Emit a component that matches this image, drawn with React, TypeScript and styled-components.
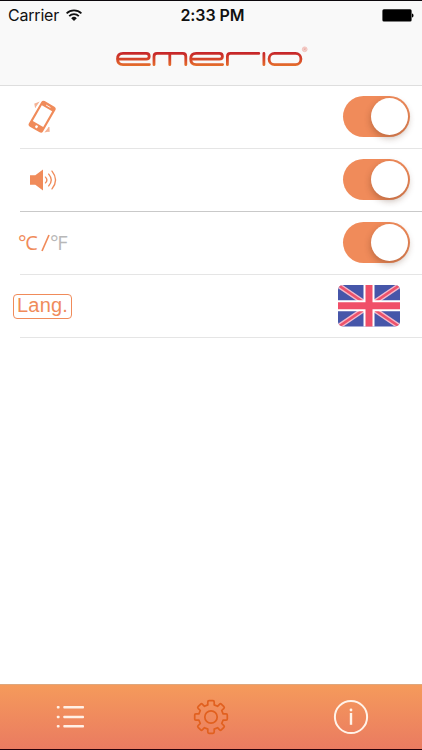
import React from "react";
import styled, { createGlobalStyle } from "styled-components";

const ORANGE = "#f08b5a";

const GlobalStyle = createGlobalStyle`
  * { box-sizing: border-box; }
  body { margin: 0; background: #fff; }
  svg { display: block; }
`;

const Screen = styled.div`
  width: 422px;
  height: 750px;
  display: flex;
  flex-direction: column;
  overflow: hidden;
  background: #fff;
  border-top: 1px solid #0c080c;
  border-bottom: 1px solid #25000a;
  font-family: Inter, "Liberation Sans", sans-serif;
`;

const Header = styled.header`
  height: 85px;
  flex: none;
  background: #f9f9f9;
  border-bottom: 1px solid #dedede;
`;

const StatusBar = styled.div`
  height: 28px;
  display: grid;
  grid-template-columns: 1fr auto 1fr;
  align-items: center;
  padding: 0 7px 0 8px;
  color: #111;
  font-size: 16px;
  line-height: 28px;
`;

const Network = styled.div`
  display: flex;
  align-items: center;
  gap: 7px;
`;

const Carrier = styled.span`
  width: 51px;
  letter-spacing: -0.2px;
  white-space: nowrap;
`;

const Clock = styled.span`
  padding-left: 2px;
  font-weight: 600;
  font-size: 16px;
  letter-spacing: -0.05px;
`;

const Power = styled.div`
  display: flex;
  justify-content: flex-end;
`;

const Brand = styled.div`
  display: flex;
  padding: 16px 0 0 115px;
`;

const Settings = styled.main`
  flex: 1;
`;

const Row = styled.div<{ $line?: string }>`
  height: 63px;
  margin-left: 20px;
  display: flex;
  align-items: center;
  justify-content: space-between;
  border-bottom: 1px solid ${(p) => p.$line ?? "#e5e5e5"};
`;

const RowIcon = styled.div<{ $shift: number }>`
  display: flex;
  margin-left: ${(p) => p.$shift}px;
`;

const Switch = styled.button<{ $on: boolean }>`
  width: 67px;
  height: 41px;
  margin: 0 12px 1px 0;
  padding: 2px;
  display: flex;
  justify-content: ${(p) => (p.$on ? "flex-end" : "flex-start")};
  border: 0;
  border-radius: 21px;
  background: ${ORANGE};
`;

const Knob = styled.span`
  width: 37px;
  height: 37px;
  border-radius: 50%;
  background: #fff;
  box-shadow: 0 3px 7px rgba(70, 30, 10, 0.32);
`;

const Units = styled.div`
  display: flex;
  align-items: center;
  margin-left: -2px;
  font-family: "Open Sans", "Noto Sans", sans-serif;
  font-weight: 400;
  font-size: 20px;
  line-height: 24px;
  letter-spacing: -1.4px;
  color: ${ORANGE};
`;

const Celsius = styled.span`
  width: 23px;
`;

const Slash = styled.span`
  width: 9px;
  display: flex;
`;

const Fahrenheit = styled.span`
  color: #b8b8b8;
`;

const LangBadge = styled.div`
  width: 59px;
  height: 25px;
  margin: 0 0 0 -7px;
  border: 1.5px solid ${ORANGE};
  border-radius: 4px;
  color: ${ORANGE};
  font-family: "Liberation Sans", Arial, sans-serif;
  font-size: 20px;
  line-height: 20px;
  letter-spacing: 0.15px;
  text-align: center;
`;

const FlagButton = styled.button`
  display: flex;
  margin: 0 22.5px 0 0;
  padding: 0;
  border: 0;
  background: none;
`;

const TabBar = styled.nav`
  height: 65px;
  flex: none;
  display: grid;
  grid-template-columns: repeat(3, 140.6px);
  justify-items: center;
  align-items: center;
  border-top: 1px solid #dea77d;
  background: linear-gradient(#f59a5b, #ea7b61);
`;

const Tab = styled.button`
  padding: 0;
  border: 0;
  background: none;
`;

const WifiIcon = () => (
  <svg width="16" height="13" viewBox="0 0 16 13" fill="none" stroke="#111" strokeWidth="1.8">
    <path d="M.6 4.4a10.4 10.4 0 0 1 14.8 0M3.2 7.2a6.7 6.7 0 0 1 9.6 0" />
    <path d="M5.2 9.2a4 4 0 0 1 5.6 0L8 12Z" fill="#111" stroke="none" />
  </svg>
);

const BatteryIcon = () => (
  <svg width="33" height="13" viewBox="0 0 33 13">
    <rect x=".4" y=".2" width="29.2" height="12.4" rx="1.5" />
    <path d="M30 4.5c2 .3 2 3.7 0 4Z" />
  </svg>
);

const EmerioLogo = () => (
  <svg width="194" height="24" viewBox="115 45 194 24" fill="none" role="img" aria-label="emerio">
    <defs>
      <linearGradient id="brand" gradientUnits="userSpaceOnUse" x1="0" y1="52" x2="0" y2="66">
        <stop offset="0" stopColor="#c4232a" />
        <stop offset=".5" stopColor="#d5442a" />
        <stop offset="1" stopColor="#e5702c" />
      </linearGradient>
    </defs>
    <g stroke="url(#brand)" strokeWidth="2.8" strokeLinecap="round" strokeLinejoin="round">
      <path d="M149.4 64.6H123q-5.5 0-5.5-5.6t5.5-5.6h23.2q3 0 3 2.9t-3 2.9H118" />
      <path d="M154 64.7V56.4q0-3 3-3h25.8q3 0 3 3v8.3M169.8 54v10.7" />
      <path d="M222.6 64.6h-26.4q-5.5 0-5.5-5.6t5.5-5.6h23.2q3 0 3 2.9t-3 2.9h-28" />
      <path d="M227.4 64.7V56.4q0-3 3-3h28.4M263.9 53.4v11.3" />
      <rect x="269.1" y="53.4" width="31.8" height="11.2" rx="5.4" />
    </g>
    <circle cx="304.7" cy="49.3" r="2.4" fill="#f7dcd8" stroke="#efb5ae" strokeWidth=".7" />
    <path d="M304 50.6v-2.5h.9q.8 0 .8.7t-.8.7H304m1 0 .7 1.1" stroke="#e4938a" strokeWidth=".45" />
  </svg>
);

const VibrateIcon = () => (
  <svg width="28" height="34" viewBox="0 0 28 34">
    <g transform="rotate(30 14 17)">
      <rect x="5.9" y="1.9" width="16.2" height="29.6" rx="2.5" fill={ORANGE} />
      <rect x="8" y="7" width="12" height="18" fill="#fff" />
      <path d="M12 4.6h4.2" stroke="#fff" strokeWidth=".8" strokeLinecap="round" />
      <circle cx="14.1" cy="28.1" r="1.4" fill="#fff" />
    </g>
    <path d="m6.8 3.4 4.9-1.8-4.2 6Z M20.9 26.8l-4.5 5.8 4.9-1Z" fill="#f4b193" />
    <path d="m6.8 3.6.7 4M21 27v5" stroke="#f4b193" strokeWidth="1" />
  </svg>
);

const SoundIcon = () => (
  <svg width="28" height="22" viewBox="0 0 28 22" fill="none">
    <path d="M1 6.3h5.3L14 .6v20.8l-7.7-5.7H1Z" fill={ORANGE} />
    <g stroke={ORANGE} strokeWidth="1.35" strokeLinecap="round">
      <path d="M16.5 8.1q2.8 2.9 0 5.8M19.7 5.1q5.1 5.9 0 11.8M23 2.1q7.1 8.9 0 17.8" />
    </g>
  </svg>
);

const SlashIcon = () => (
  <svg width="9" height="18" viewBox="0 0 9 18">
    <path d="m1 17 7-16" stroke={ORANGE} strokeWidth="1.7" />
  </svg>
);

const BritishFlag = () => (
  <svg width="62" height="42" viewBox="0 0 62 42">
    <clipPath id="flag"><rect width="62" height="41.4" rx="5" /></clipPath>
    <g clipPath="url(#flag)">
      <path d="M0 0h62v42H0Z" fill="#4656a9" />
      <path d="m0 0 62 42M0 42 62 0" stroke="#f4b8ca" strokeWidth="5.2" />
      <path d="m0 0 62 42M0 42 62 0" stroke="#ed526b" strokeWidth="2.6" />
      <path d="M31 0v42M0 20.8h62" stroke="#fff" strokeWidth="11" />
      <path d="M31 0v42M0 20.8h62" stroke="#f04f68" strokeWidth="7" />
    </g>
  </svg>
);

const ListIcon = () => (
  <svg width="28" height="24" viewBox="0 0 28 24" fill="#fff0e6">
    {[1, 10.8, 20].map((y) => (
      <g key={y}>
        <rect x="0.8" y={y} width="2.8" height="2.5" rx=".8" />
        <rect x="7.3" y={y} width="20.7" height="2.5" rx=".8" />
      </g>
    ))}
  </svg>
);

const GearIcon = () => (
  <svg width="36" height="36" viewBox="-18 -18 36 36" fill="none" stroke="#e1601f" strokeWidth="1.7" strokeLinejoin="round">
    <path d="M-3.2-12.1v-3q0-1.2 1.2-1.2h4q1.2 0 1.2 1.2v3l3.3 1.4 2.2-2.2q.8-.8 1.6 0l2.6 2.6q.8.8 0 1.6l-2.2 2.2 1.4 3.3h3q1.2 0 1.2 1.2v4q0 1.2-1.2 1.2h-3l-1.4 3.3 2.2 2.2q.8.8 0 1.6l-2.6 2.6q-.8.8-1.6 0l-2.2-2.2-3.3 1.4v3q0 1.2-1.2 1.2h-4q-1.2 0-1.2-1.2v-3l-3.3-1.4-2.2 2.2q-.8.8-1.6 0l-2.6-2.6q-.8-.8 0-1.6l2.2-2.2-1.4-3.3h-3q-1.2 0-1.2-1.2v-4q0-1.2 1.2-1.2h3l1.4-3.3-2.2-2.2q-.8-.8 0-1.6l2.6-2.6q.8-.8 1.6 0l2.2 2.2Z" />
    <circle r="6.2" />
  </svg>
);

const InfoIcon = () => (
  <svg width="36" height="36" viewBox="-18 -18 36 36" fill="none" stroke="#fff3e9">
    <circle r="16.1" strokeWidth="2" />
    <path d="M0-4V7.8" strokeWidth="2.4" />
    <circle cy="-7" r="1.4" fill="#fff3e9" stroke="none" />
  </svg>
);

const Toggle = ({ label }: { label: string }) => {
  const [on, setOn] = React.useState(true);
  return (
    <Switch $on={on} role="switch" aria-checked={on} aria-label={label} onClick={() => setOn(!on)}>
      <Knob />
    </Switch>
  );
};

export default function App() {
  return (
    <Screen>
      <GlobalStyle />
      <Header>
        <StatusBar>
          <Network><Carrier>Carrier</Carrier><WifiIcon /></Network>
          <Clock>2:33 PM</Clock>
          <Power><BatteryIcon /></Power>
        </StatusBar>
        <Brand><EmerioLogo /></Brand>
      </Header>
      <Settings>
        <Row>
          <RowIcon $shift={8}><VibrateIcon /></RowIcon>
          <Toggle label="Vibration" />
        </Row>
        <Row $line="#c9c9c9">
          <RowIcon $shift={9}><SoundIcon /></RowIcon>
          <Toggle label="Sound" />
        </Row>
        <Row>
          <Units>
            <Celsius>°C</Celsius><Slash><SlashIcon /></Slash><Fahrenheit>°F</Fahrenheit>
          </Units>
          <Toggle label="Temperature unit" />
        </Row>
        <Row>
          <LangBadge>Lang.</LangBadge>
          <FlagButton aria-label="English"><BritishFlag /></FlagButton>
        </Row>
      </Settings>
      <TabBar>
        <Tab aria-label="List"><ListIcon /></Tab>
        <Tab aria-label="Settings"><GearIcon /></Tab>
        <Tab aria-label="Information"><InfoIcon /></Tab>
      </TabBar>
    </Screen>
  );
}
